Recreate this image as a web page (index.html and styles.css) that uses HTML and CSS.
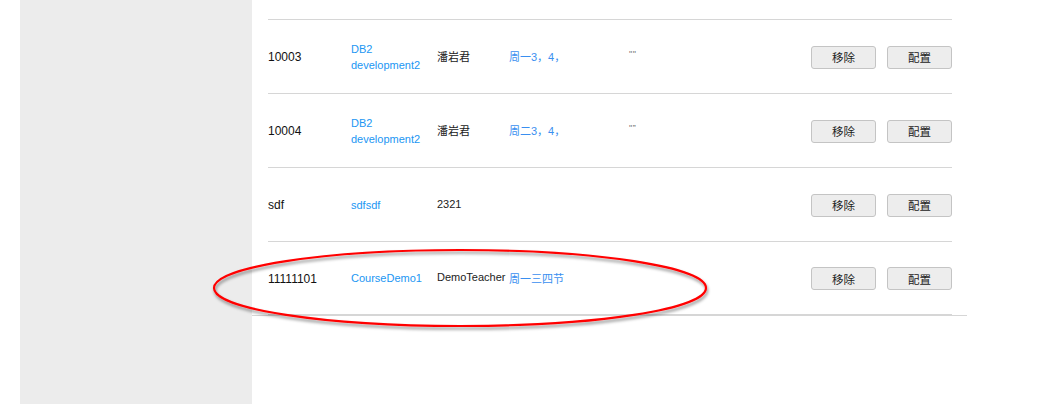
FILE: index.html
```html
<!DOCTYPE html>
<html>
<head>
<meta charset="utf-8">
<link rel="stylesheet" href="styles.css">
</head>
<body>
<div class="page">
  <aside class="sidebar"></aside>
  <main class="main">
    <div class="list">
      <div class="row">
        <div class="c-id">10003</div>
        <div class="c-course"><a>DB2<br>development2</a></div>
        <div class="c-teacher">潘岩君</div>
        <div class="c-time">周一3，4，</div>
        <div class="c-note">""</div>
        <div class="c-actions"><button class="btn">移除</button><button class="btn">配置</button></div>
      </div>
      <div class="row">
        <div class="c-id">10004</div>
        <div class="c-course"><a>DB2<br>development2</a></div>
        <div class="c-teacher">潘岩君</div>
        <div class="c-time">周二3，4，</div>
        <div class="c-note">"”</div>
        <div class="c-actions"><button class="btn">移除</button><button class="btn">配置</button></div>
      </div>
      <div class="row">
        <div class="c-id">sdf</div>
        <div class="c-course"><a>sdfsdf</a></div>
        <div class="c-teacher">2321</div>
        <div class="c-time"></div>
        <div class="c-note"></div>
        <div class="c-actions"><button class="btn">移除</button><button class="btn">配置</button></div>
      </div>
      <div class="row">
        <div class="c-id">11111101</div>
        <div class="c-course"><a>CourseDemo1</a></div>
        <div class="c-teacher">DemoTeacher</div>
        <div class="c-time">周一三四节</div>
        <div class="c-note"></div>
        <div class="c-actions"><button class="btn">移除</button><button class="btn">配置</button></div>
      </div>
    </div>
  </main>
  <svg class="mark" width="520" height="100" viewBox="0 0 520 100">
    <defs>
      <filter id="sh" x="-10%" y="-30%" width="120%" height="160%">
        <feDropShadow dx="1" dy="2.5" stdDeviation="1.6" flood-color="#000" flood-opacity="0.45"/>
      </filter>
    </defs>
    <ellipse cx="258" cy="44" rx="246" ry="38" fill="none" stroke="#f00" stroke-width="2.2" filter="url(#sh)"/>
  </svg>
</div>
</body>
</html>
```
FILE: styles.css
```css
* { box-sizing: border-box; }
html, body { margin: 0; padding: 0; background: #fff; }
body {
  font-family: "Liberation Sans", Arial, "Noto Sans CJK SC", sans-serif;
  color: #222;
}
.page {
  position: relative;
  display: flex;
  height: 404px;
  padding-left: 20px;
}
.sidebar {
  width: 232px;
  background: #ececec;
  flex: none;
}
.main {
  width: 715px;
  flex: none;
}
.list {
  margin-top: 19px;
  padding: 0 15px 0 16px;
  border-bottom: 1px solid #d6d6d6;
}
.row {
  display: grid;
  grid-template-columns: 83px 86px 72px 120px 1fr auto;
  align-items: center;
  height: 74px;
  border-top: 1px solid #d6d6d6;
}
.row:last-child { border-bottom: 1px solid #d6d6d6; }
.c-id { font-size: 12px; color: #111; padding-top: 1px; }
.c-course { font-size: 11px; line-height: 16px; }
.c-course a { color: #2196f3; }
.c-teacher { font-size: 11px; color: #222; padding-bottom: 2px; white-space: nowrap; }
.c-time { font-size: 11px; color: #3a8ff0; padding-bottom: 1px; }
.c-note { font-size: 9px; line-height: 9px; color: #777; padding-bottom: 4px; letter-spacing: 0.5px; }
.c-actions { display: flex; gap: 11px; padding-top: 1px; }
.btn {
  width: 65px;
  height: 23px;
  padding: 0;
  font-family: "Noto Sans CJK SC", sans-serif;
  font-size: 11.5px;
  color: #222;
  background: #ededed;
  border: 1px solid #c4c4c4;
  border-radius: 3px;
}
.mark {
  position: absolute;
  left: 202px;
  top: 244px;
  overflow: visible;
}
```
